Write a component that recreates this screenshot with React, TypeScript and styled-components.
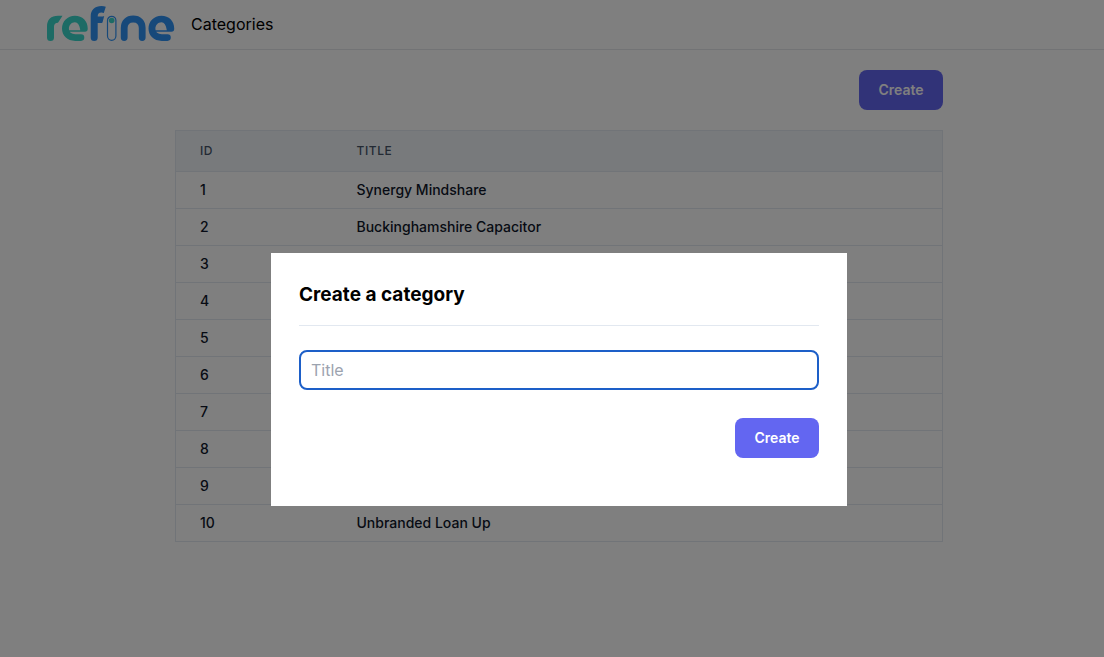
import React from "react";
import styled, { createGlobalStyle } from "styled-components";

const GlobalStyle = createGlobalStyle`
  *, *::before, *::after { box-sizing: border-box; }
  body {
    margin: 0;
    background: #fff;
    color: #000;
    font-family: Inter, "Liberation Sans", sans-serif;
    font-size: 16px;
    line-height: 24px;
  }
`;

const Page = styled.div`
  min-height: 100vh;
  padding-left: 14px;
`;

const Header = styled.header`
  margin-left: -14px;
  border-bottom: 1px solid #e5e7eb;
`;

const Nav = styled.nav`
  display: flex;
  align-items: center;
  gap: 16px;
  height: 49px;
  padding: 0 46px;
`;

const HomeLink = styled.a`
  display: flex;
`;

const NavLink = styled.a`
  padding-bottom: 1px;
  color: inherit;
  text-decoration: none;
`;

const Main = styled.main`
  max-width: 768px;
  margin: 0 auto;
  padding: 20px 0;
`;

const Actions = styled.div`
  display: flex;
  justify-content: flex-end;
`;

const Button = styled.button`
  min-width: 84px;
  height: 40px;
  padding: 0 16px;
  border: 0;
  border-radius: 8px;
  background: #6366f1;
  color: #fff;
  font: 600 14px/20px Inter, "Liberation Sans", sans-serif;
  cursor: pointer;
`;

const Table = styled.table`
  width: 100%;
  margin-top: 20px;
  border: 1px solid #e2e8f0;
  border-collapse: collapse;
  table-layout: fixed;
  text-align: left;
`;

const HeadCell = styled.th<{ $narrow?: boolean }>`
  width: ${(p) => (p.$narrow ? "157px" : "auto")};
  padding: 12px 24px;
  border-bottom: 1px solid #e2e8f0;
  background: #f1f5f9;
  color: #475569;
  font-size: 12px;
  font-weight: 500;
  line-height: 16px;
  letter-spacing: 0.05em;
  text-transform: uppercase;
`;

const Cell = styled.td`
  height: 37px;
  padding: 8px 24px;
  border-bottom: 1px solid #e2e8f0;
  color: #0f172a;
  font-size: 14px;
  font-weight: 500;
  line-height: 20px;
`;

const Overlay = styled.div`
  position: fixed;
  inset: 0;
  padding: 253px 0 0 14px;
  background: rgba(0, 0, 0, 0.5);
`;

const Dialog = styled.section`
  max-width: 576px;
  margin: 0 auto;
  padding: 28px 28px 48px;
  background: #fff;
`;

const DialogTitle = styled.h2`
  margin: 0;
  padding-bottom: 16px;
  border-bottom: 1px solid #e2e8f0;
  font-size: 19px;
  font-weight: 700;
  line-height: 28px;
`;

const Form = styled.form`
  display: flex;
  flex-direction: column;
  gap: 28px;
  padding-top: 24px;
`;

const TextInput = styled.input`
  width: 100%;
  height: 40px;
  padding: 0 10px;
  border: 2px solid #1d5fc8;
  border-radius: 8px;
  outline: none;
  background: #fff;
  font: 400 16px/24px Inter, "Liberation Sans", sans-serif;

  &::placeholder { color: #9ca3af; }
`;

const categories = [
  { id: 1, title: "Synergy Mindshare" },
  { id: 2, title: "Buckinghamshire Capacitor" },
  { id: 3, title: "" },
  { id: 4, title: "" },
  { id: 5, title: "" },
  { id: 6, title: "" },
  { id: 7, title: "" },
  { id: 8, title: "" },
  { id: 9, title: "" },
  { id: 10, title: "Unbranded Loan Up" },
];

const E_PATH =
  "M6.500 14.500H18.300C17.600 9.500 15.700 6.600 12.900 6.600C9.500 6.600 6.900 9.500 6.900 12.900C6.900 16.500 9.500 18.600 13.300 18.600H19A3.300 3.300 0 0 1 19 25.200H13.300C5.200 25.200 0 20 0 12.900C0 5.500 5.500 0 12.900 0C20.500 0 25.700 5.300 25.700 12.600V13.200C25.700 15 24.700 16 23 16H6.500Z";

function Logo() {
  return (
    <svg width="129" height="39" viewBox="0 0 129 39" fill="none" strokeLinecap="round" role="img" aria-label="refine">
      <g fill="#3ad6ca">
        <path d="M1 32.500V21.500C1 14.500 5 10.700 12 10.700H16.500L12 17.700C9.500 17.700 8 19 8 21.500V32.500A3.500 3.500 0 0 1 1 32.500Z" />
        <path transform="translate(16 10.700)" d={E_PATH} />
        <circle cx="65.700" cy="15.500" r="2.800" />
      </g>
      <g fill="#2f92f5">
        <path d="M44.700 32.500V11.500C44.700 4.800 49 1 55.500 1Q58 1 59.800 1.800L57.800 8Q56.800 7.600 55.500 7.600C52.700 7.600 51.700 9 51.700 11.500H55.500Q57 11.500 58.200 11L56.500 17.500Q56 18 54.500 18H51.700V32.500A3.500 3.500 0 0 1 44.700 32.500Z" />
        <path transform="translate(102.500 10.700)" d={E_PATH} />
      </g>
      <g stroke="#2f92f5">
        <path strokeWidth="6.800" d="M78.200 32.500V23C78.200 17.500 81.500 14 87.200 14S96.200 17.500 96.200 23V32.500" />
        <rect x="61.500" y="11.300" width="8.400" height="24" rx="4.200" strokeWidth="1.200" />
      </g>
    </svg>
  );
}

export default function App() {
  return (
    <>
      <GlobalStyle />
      <Page>
        <Header>
          <Nav>
            <HomeLink href="#"><Logo /></HomeLink>
            <NavLink href="#categories">Categories</NavLink>
          </Nav>
        </Header>
        <Main>
          <Actions><Button type="button">Create</Button></Actions>
          <Table>
            <thead>
              <tr>
                <HeadCell $narrow scope="col">ID</HeadCell>
                <HeadCell scope="col">Title</HeadCell>
              </tr>
            </thead>
            <tbody>
              {categories.map((c) => (
                <tr key={c.id}>
                  <Cell>{c.id}</Cell>
                  <Cell>{c.title}</Cell>
                </tr>
              ))}
            </tbody>
          </Table>
        </Main>
      </Page>
      <Overlay>
        <Dialog role="dialog" aria-modal="true" aria-labelledby="dialog-title">
          <DialogTitle id="dialog-title">Create a category</DialogTitle>
          <Form onSubmit={(e) => e.preventDefault()}>
            <TextInput name="title" placeholder="Title" aria-label="Title" />
            <Actions><Button type="submit">Create</Button></Actions>
          </Form>
        </Dialog>
      </Overlay>
    </>
  );
}
